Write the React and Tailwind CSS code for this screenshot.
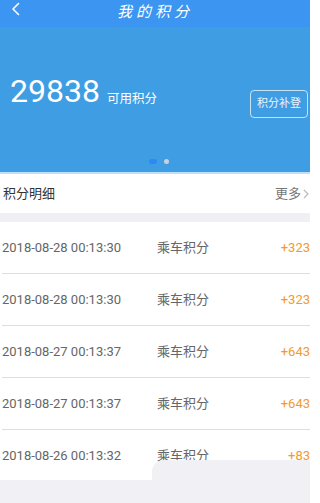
import React from "react";

const rows = [
  { d: "2018-08-28 00:13:30", v: "+323" },
  { d: "2018-08-28 00:13:30", v: "+323" },
  { d: "2018-08-27 00:13:37", v: "+643" },
  { d: "2018-08-27 00:13:37", v: "+643" },
  { d: "2018-08-26 00:13:32", v: "+83" },
];

export default function App() {
  return (
    <div
      className="relative w-[310px] h-[503px] overflow-hidden bg-white"
      style={{ fontFamily: "Roboto, 'Noto Sans CJK SC', sans-serif" }}
    >
      <div className="h-[27px] bg-[#3b95f1] relative flex items-center justify-center">
        <svg className="absolute left-[10px] top-[2px]" width="12" height="14" viewBox="0 0 12 14">
          <path d="M8.5 1.5 L3 7 L8.5 12.5" fill="none" stroke="white" strokeWidth="1.6" strokeLinecap="round" strokeLinejoin="round" />
        </svg>
        <span
          className="text-white text-[15px] tracking-[4px] leading-none -mt-[7px] italic"
          style={{ fontFamily: "'Noto Sans CJK SC', sans-serif" }}
        >
          我的积分
        </span>
      </div>
      <div className="h-[145px] bg-[#3f9de4] flex flex-col">
        <div className="flex items-center justify-between pl-[10px] pr-[2px] pt-[37px]">
          <div className="flex items-end">
            <span className="text-white text-[32px] leading-[32px] font-normal">29838</span>
            <span className="text-white text-[12.5px] leading-none ml-[7px] mb-[2px]">可用积分</span>
          </div>
          <div className="mt-[26px] w-[58px] h-[28px] rounded-[4px] border-[1.5px] border-white/70 flex items-center justify-center text-white/90 text-[11px]">
            积分补登
          </div>
        </div>
        <div className="mt-auto mb-[8px] flex justify-center items-center gap-[7px] pl-[8px]">
          <span className="w-[8px] h-[5px] rounded-full bg-[#2a8cf2]" />
          <span className="w-[5px] h-[5px] rounded-full bg-[#c9d2da]" />
        </div>
      </div>
      <div className="h-[2px] bg-[#bfe0f7]" />
      <div className="h-[39px] flex items-center justify-between pl-[3px]">
        <span className="text-[13px] text-[#333]">积分明细</span>
        <span className="flex items-center text-[13px] text-[#777]">
          更多
          <svg width="8" height="12" viewBox="0 0 8 12" className="ml-[1px]">
            <path d="M2 2 L6 6 L2 10" fill="none" stroke="#bbb" strokeWidth="1.2" />
          </svg>
        </span>
      </div>
      <div className="h-[9px] bg-[#efeff4]" />
      <div className="flex flex-col">
        {rows.map((r, i) => (
          <div key={i} className="h-[52px] ml-[2px] border-b border-[#dedede] flex items-center text-[13px]">
            <span className="w-[155px] text-[#666]">{r.d}</span>
            <span className="text-[#666]">乘车积分</span>
            <span className="ml-auto text-[#f39a2a]">{r.v}</span>
          </div>
        ))}
      </div>
      <div className="absolute left-0 right-0 top-[480px] bottom-0 bg-[#f1f0f5]" />
      <div className="absolute left-[152px] right-0 top-[460px] bottom-0 bg-[#f1f0f5] rounded-tl-[12px]" />
    </div>
  );
}
